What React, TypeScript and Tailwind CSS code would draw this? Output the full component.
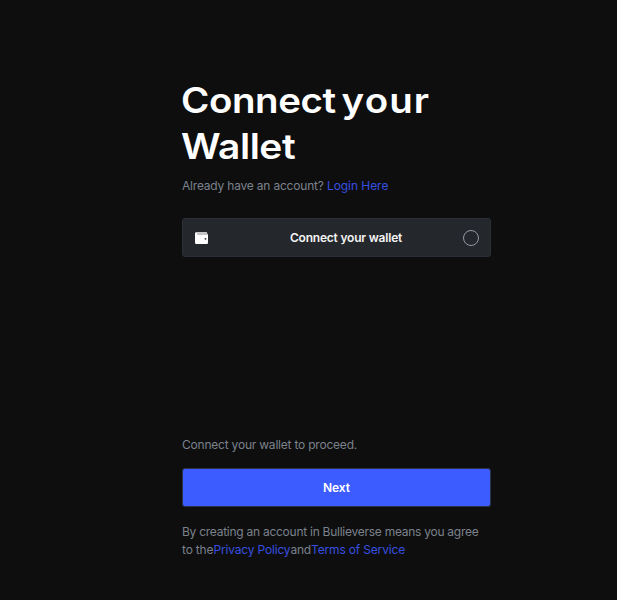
function WalletIcon() {
  return (
    <svg className="h-3 w-[13px] shrink-0" viewBox="0 0 13 12" fill="none">
      <path d="M1.3 0.2H11.3Q12.2 0.2 12.2 1V2.3H13V10.8Q13 12 11.8 12H1.2Q0 12 0 10.8V1.5Q0 0.2 1.3 0.2Z" fill="#fff" />
      <path d="M2 2H12.2" stroke="#85888c" strokeWidth="1" />
      <circle cx="10.5" cy="6.8" r="0.9" fill="#25282d" />
    </svg>
  );
}

export default function App() {
  return (
    <main className="h-[600px] w-[617px] overflow-hidden bg-[#0e0e0e] pl-[182px] pt-[77px] font-['Inter',sans-serif] text-[12px] text-[#7b828c]">
      <div className="w-[309px]">
        <h1 className="h-[92px] text-[35px] font-semibold leading-[46px] text-white">
          <span className="-ml-px block w-max origin-left scale-x-[1.1] whitespace-nowrap tracking-[-0.4px]">
            Connect <span className="-ml-[3px] tracking-[1px]">your</span>
          </span>
          <span className="-ml-px block w-max origin-left scale-x-[1.11] whitespace-nowrap tracking-[-0.4px]">Wallet</span>
        </h1>
        <p className="mt-2 h-[18px] whitespace-nowrap leading-[18px] tracking-[-0.2px]">
          Already have an account? <a className="tracking-[-0.05px] text-[#374fe0]">Login Here</a>
        </p>
        <button className="mt-[23px] flex h-[39px] w-full items-center justify-between rounded-[3px] border border-[#2b3037] bg-[#24272c] pl-3 pr-[11px] font-semibold text-[#f4f4f4]">
          <WalletIcon />
          <span className="ml-[21px] whitespace-nowrap tracking-[-0.2px]">Connect your wallet</span>
          <span className="size-4 rounded-full border border-[#9498a2]" />
        </button>
        <p className="mt-[179px] h-[18px] whitespace-nowrap leading-[18px] tracking-[-0.21px]">Connect your wallet to proceed.</p>
        <button className="mt-[14px] h-[39px] w-full rounded-[3px] border border-[#293249] bg-[#3d5cff] pt-px font-semibold text-white">
          Next
        </button>
        <div className="mt-4 whitespace-nowrap leading-[17.5px]">
          <p className="tracking-[-0.26px]">By creating an account in Bullieverse means you agree</p>
          <p className="tracking-[-0.17px]">to the<a className="text-[#374fe0]">Privacy Policy</a>and<a className="text-[#374fe0]">Terms of Service</a></p>
        </div>
      </div>
    </main>
  );
}
